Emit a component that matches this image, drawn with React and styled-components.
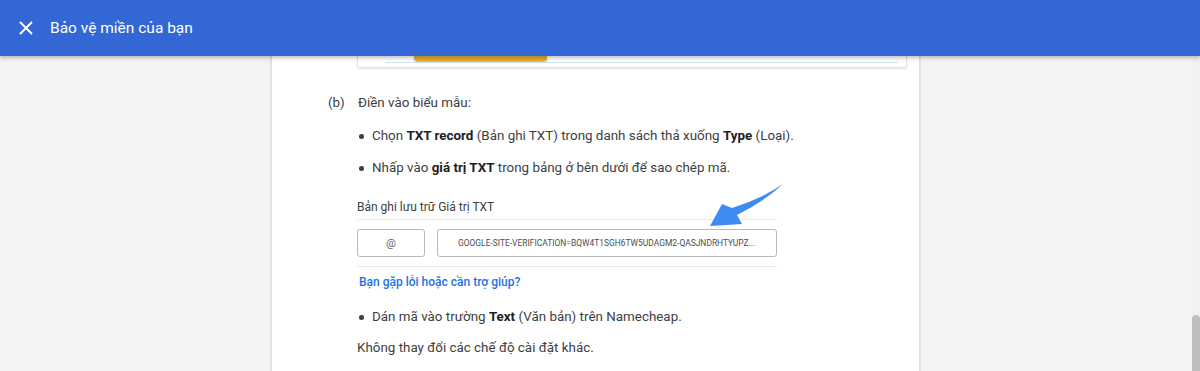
import React from "react";
import styled, { createGlobalStyle } from "styled-components";

const GlobalStyle = createGlobalStyle`
  html, body {
    margin: 0;
    padding: 0;
    background: #f4f4f4;
    font-family: Roboto, "Noto Sans", Arial, sans-serif;
    overflow: hidden;
  }
`;

const Page = styled.div`
  position: relative;
  height: 371px;
  overflow: hidden;
  background: #f4f4f4;
`;

const Header = styled.header`
  position: relative;
  z-index: 2;
  height: 56px;
  background: #3367d6;
  box-shadow: 0 2px 4px rgba(0, 0, 0, 0.25);
  display: flex;
  align-items: center;
  padding-left: 17px;
  color: #fff;
`;

const CloseButton = styled.span`
  display: flex;
  width: 18px;
  height: 18px;
  align-items: center;
  justify-content: center;
  margin-right: 15px;
`;

const Title = styled.h1`
  margin: 0;
  font-size: 15.5px;
  font-weight: 400;
`;

const Body = styled.main`
  display: flex;
  padding-left: 270px;
`;

const Card = styled.section`
  width: 651px;
  height: 315px;
  background: #fff;
  border-left: 2px solid #e2e2e2;
  border-right: 2px solid #e2e2e2;
  padding: 0 12px 0 56px;
  box-sizing: border-box;
  color: #3c4043;
  font-size: 13.4px;
`;

const Shot = styled.div`
  margin-left: 29px;
  height: 11px;
  border: 1px solid #e3e3e3;
  border-top: none;
  border-radius: 0 0 3px 3px;
  box-shadow: 0 1px 2px rgba(0, 0, 0, 0.12);
  position: relative;
`;

const ShotButton = styled.div`
  position: absolute;
  left: 56px;
  top: 0;
  width: 133px;
  height: 5px;
  background: #e6ac2b;
  border-radius: 0 0 4px 4px;
  box-shadow: 0 1px 2px rgba(0, 0, 0, 0.35);
`;

const ShotLine = styled.div`
  position: absolute;
  left: 28px;
  right: 8px;
  top: 6px;
  height: 1px;
  background: #cfe3ef;
`;

const Step = styled.div`
  display: flex;
  margin-top: 26px;
`;

const StepLabel = styled.span`
  width: 30px;
  flex: none;
  line-height: 18px;
`;

const StepContent = styled.div`
  position: relative;
  flex: 1;
`;

const Lead = styled.p`
  margin: 0;
  line-height: 18px;
`;

const List = styled.ul`
  list-style: none;
  margin: ${p => p.$top || "15px"} 0 0;
  padding: 0;
  display: flex;
  flex-direction: column;
  gap: 14px;
`;

const Item = styled.li`
  position: relative;
  padding-left: 14px;
  line-height: 18px;

  &::before {
    content: "";
    position: absolute;
    left: 1px;
    top: 7px;
    width: 4.5px;
    height: 4.5px;
    border-radius: 50%;
    background: #3c4043;
  }

  b {
    color: #202124;
    font-weight: 700;
  }
`;

const Table = styled.div`
  width: 420px;
  margin-left: -1px;
  margin-top: 22px;
`;

const TableHead = styled.div`
  font-size: 12px;
  line-height: 16px;
  padding-bottom: 4px;
  border-bottom: 1px solid #e8e8e8;
`;

const TableRow = styled.div`
  display: flex;
  gap: 12px;
  padding: 9px 0;
  border-bottom: 1px solid #e8e8e8;
`;

const Cell = styled.div`
  height: 26px;
  border: 1px solid #b9b9b9;
  border-radius: 3px;
  display: flex;
  align-items: center;
  font-size: ${p => (p.$code ? "8.45px" : "11px")};
  color: ${p => (p.$code ? "#4a4d51" : "#5f6368")};
  box-sizing: content-box;
  white-space: nowrap;
  ${p =>
    p.$code
      ? "flex: 1; padding-left: 20px;"
      : "width: 66px; justify-content: center;"}
`;

const HelpLink = styled.a`
  display: block;
  margin-top: 7px;
  margin-left: 1px;
  font-size: 12px;
  line-height: 16px;
  font-weight: 500;
  color: #1a73e8;
  text-decoration: none;
`;

const Note = styled.p`
  margin: 13px 0 0 -1px;
  line-height: 18px;
`;

const Arrow = styled.svg`
  position: absolute;
  left: 342px;
  top: 85px;
  pointer-events: none;
`;

const ScrollTrack = styled.div`
  position: absolute;
  right: 0;
  top: 56px;
  bottom: 0;
  width: 8px;
  background: #f1f1f1;
`;

const ScrollThumb = styled.div`
  position: absolute;
  left: 0;
  right: 0;
  top: 259px;
  bottom: 0;
  background: #bcbec1;
  border-radius: 4px 4px 0 0;
`;

export default function App() {
  return (
    <Page>
      <GlobalStyle />
      <Header>
        <CloseButton>
          <svg width="14" height="14" viewBox="0 0 14 14">
            <path d="M1 1 L13 13 M13 1 L1 13" stroke="#fff" strokeWidth="2" />
          </svg>
        </CloseButton>
        <Title>Bảo vệ miền của bạn</Title>
      </Header>
      <Body>
        <Card>
          <Shot>
            <ShotButton />
            <ShotLine />
          </Shot>
          <Step>
            <StepLabel>(b)</StepLabel>
            <StepContent>
              <Lead>Điền vào biểu mẫu:</Lead>
              <List>
                <Item>
                  Chọn <b>TXT record</b> (Bản ghi TXT) trong danh sách thả xuống <b>Type</b> (Loại).
                </Item>
                <Item>
                  Nhấp vào <b>giá trị TXT</b> trong bảng ở bên dưới để sao chép mã.
                </Item>
              </List>
              <Table>
                <TableHead>Bản ghi lưu trữ Giá trị TXT</TableHead>
                <TableRow>
                  <Cell>@</Cell>
                  <Cell $code>GOOGLE-SITE-VERIFICATION=BQW4T1SGH6TW5UDAGM2-QASJNDRHTYUPZ...</Cell>
                </TableRow>
              </Table>
              <HelpLink href="#">Bạn gặp lỗi hoặc cần trợ giúp?</HelpLink>
              <List $top="18px">
                <Item>
                  Dán mã vào trường <b>Text</b> (Văn bản) trên Namecheap.
                </Item>
              </List>
              <Note>Không thay đổi các chế độ cài đặt khác.</Note>
              <Arrow width="90" height="55" viewBox="0 0 90 55">
                <path
                  d="M83 5 Q61 20 32 29 L22 25 L10 47 L42 45 L37 36 Q65 22 83 5 Z"
                  fill="#3f8cf0"
                />
              </Arrow>
            </StepContent>
          </Step>
        </Card>
      </Body>
      <ScrollTrack>
        <ScrollThumb />
      </ScrollTrack>
    </Page>
  );
}
